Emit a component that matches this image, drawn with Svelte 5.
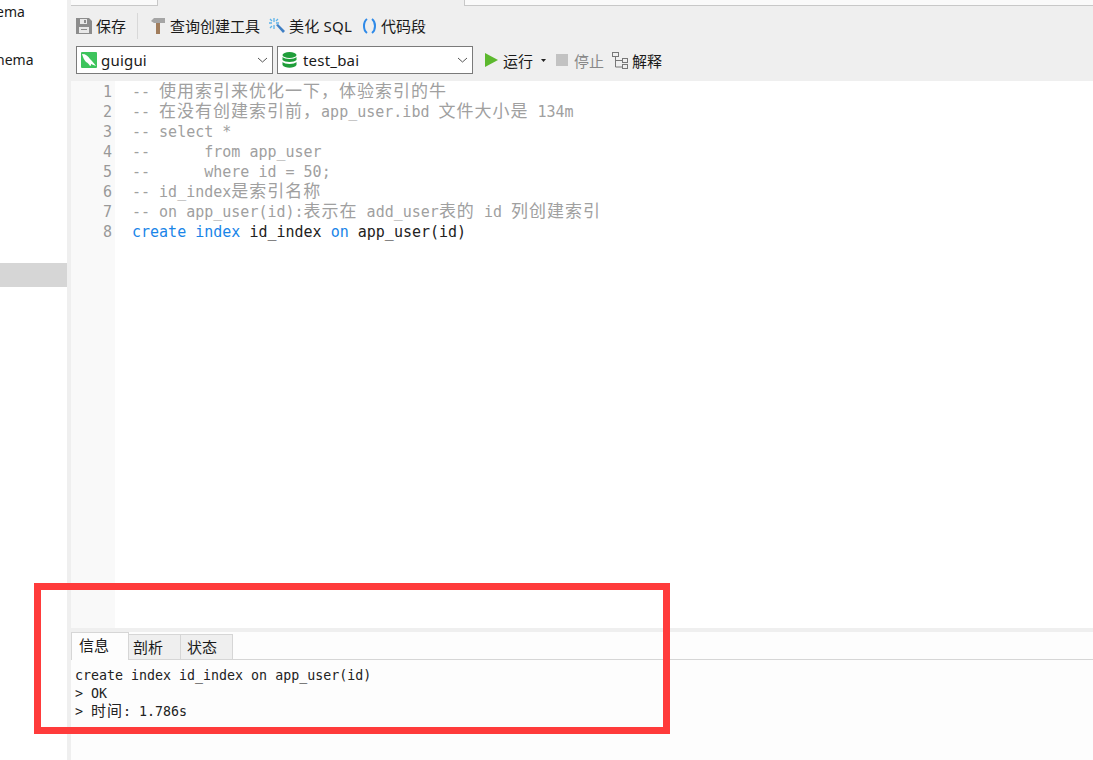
<script>
  const cjk = /([\u3000-\u9fff\uff00-\uffef]+)/
  const editorLines = [
    '-- 使用索引来优化一下，体验索引的牛',
    '-- 在没有创建索引前，app_user.ibd 文件大小是 134m',
    '-- select *',
    '--      from app_user',
    '--      where id = 50;',
    '-- id_index是索引名称',
    '-- on app_user(id):表示在 add_user表的 id 列创建索引',
  ]
  const resultLines = ['create index id_index on app_user(id)', '> OK', '> 时间: 1.786s']
  const split = (s) => s.split(cjk)
</script>

<div class="page">
  <aside class="sidebar">
    <div class="db"><span>ema</span></div>
    <div class="db"></div>
    <div class="db"><span>nema</span></div>
    <div class="selected"></div>
  </aside>

  <main class="main">
    <div class="tabs">
      <div class="tab first"></div>
      <div class="tab active"></div>
      <div class="tab rest"></div>
    </div>

    <div class="toolbar">
      <button class="tool save">
        <svg width="16" height="16" viewBox="0 0 16 16">
          <path d="M0 0h13l3 3v13H0z" fill="#8c8c8c" />
          <rect x="4" y="1" width="7" height="5" fill="#e8e8e8" />
          <rect x="8" y="2" width="2" height="3" fill="#8c8c8c" />
          <rect x="3" y="9" width="10" height="6" fill="#e8e8e8" />
          <rect x="5" y="11" width="6" height="1" fill="#8c8c8c" />
        </svg>
        保存
      </button>
      <span class="sep"></span>
      <button class="tool build">
        <svg width="14" height="16" viewBox="0 0 14 16">
          <path d="M0 3l3-3h11v5H3z" fill="#a5a5a5" />
          <rect x="5" y="5" width="4" height="11" fill="#a17d5c" />
        </svg>
        查询创建工具
      </button>
      <button class="tool beautify">
        <svg width="16" height="16" viewBox="0 0 16 16">
          <path d="M7 7l2-1 7 7-2 2z" fill="#3f7fc4" />
          <path d="M5 0v4M5 7v4M0 5h3M7 5h3M1 1l2 2M9 1L7 3M1 10l2-2" stroke="#5db4ea" stroke-width="1.3" fill="none" />
        </svg>
        美化 SQL
      </button>
      <button class="tool snippet">
        <svg width="15" height="16" viewBox="0 0 15 16">
          <path d="M5 1C1 4 1 12 5 15M10 1c4 3 4 11 0 14" stroke="#2f8ae8" stroke-width="2" fill="none" />
        </svg>
        代码段
      </button>
    </div>

    <div class="runbar">
      <div class="combo conn">
        <svg class="logo" width="16" height="16" viewBox="0 0 16 16">
          <rect width="16" height="16" rx="1" fill="#3dc45c" />
          <path d="M1 2c4 0 6 2 8 5 2 2 4 4 6 7-3-1-4-2-5-2 0 1 0 2-1 2-1-2-2-3-4-4C3 8 2 5 1 2z" fill="#fff" />
        </svg>
        <span>guigui</span>
        <svg class="chev" width="11" height="6" viewBox="0 0 11 6"><path d="M1 1l4.500 4L10 1" stroke="#555" fill="none" /></svg>
      </div>
      <div class="combo schema">
        <svg class="logo" width="15" height="16" viewBox="0 0 15 16">
          <ellipse cx="7.500" cy="3" rx="7" ry="3" fill="#1f9e3a" />
          <path d="M.5 5c2 2.500 12 2.500 14 0v3c-2 2.500-12 2.500-14 0zM.5 10c2 2.500 12 2.500 14 0v3c-2 3.500-12 3.500-14 0z" fill="#1f9e3a" />
        </svg>
        <span>test_bai</span>
        <svg class="chev" width="11" height="6" viewBox="0 0 11 6"><path d="M1 1l4.500 4L10 1" stroke="#555" fill="none" /></svg>
      </div>
      <button class="tool run">
        <svg width="13" height="14" viewBox="0 0 13 14"><path d="M0 0l13 7-13 7z" fill="#5cb82e" /></svg>
        运行
        <svg class="drop" width="5" height="3" viewBox="0 0 5 3"><path d="M0 0h5L2.500 3z" fill="#222" /></svg>
      </button>
      <button class="tool stop">
        <span class="square"></span>
        停止
      </button>
      <button class="tool explain">
        <svg width="16" height="17" viewBox="0 0 16 17" fill="none" stroke="#777">
          <rect x=".5" y=".5" width="6" height="4" />
          <rect x="10.500" y="6.500" width="5" height="4" />
          <rect x="10.500" y="12.500" width="5" height="4" />
          <path d="M3.500 5v10h7M3.500 8.500h7" />
        </svg>
        解释
      </button>
    </div>

    <div class="editor">
      <div class="gutter">
        {#each [1, 2, 3, 4, 5, 6, 7, 8] as n}
          <div>{n}</div>
        {/each}
      </div>
      <div class="code">
        {#each editorLines as line}
          <div class="line comment">
            {#each split(line) as part, i}
              {#if i % 2}<span class="wide">{part}</span>{:else}{part}{/if}
            {/each}
          </div>
        {/each}
        <div class="line"><span class="kw">create index</span> id_index <span class="kw">on</span> app_user(id)</div>
      </div>
    </div>

    <div class="result">
      <div class="result-tabs">
        <div class="rtab on">信息</div>
        <div class="rtab second">剖析</div>
        <div class="rtab third">状态</div>
      </div>
      <div class="output">
        {#each resultLines as line}
          <div class="oline">
            {#each split(line) as part, i}
              {#if i % 2}<span class="wide">{part}</span>{:else}{part}{/if}
            {/each}
          </div>
        {/each}
      </div>
    </div>
  </main>

  <div class="highlight"></div>
</div>

<style>
  :global(body) {
    margin: 0;
    background: #fdfdfd;
  }
  .page {
    position: relative;
    display: flex;
    width: 1093px;
    height: 760px;
    overflow: hidden;
    font-family: "Noto Sans", "Noto Sans CJK SC", sans-serif;
    font-size: 15px;
    color: #1a1a1a;
  }
  .sidebar {
    width: 67px;
    flex: none;
    background: #fff;
    font-size: 14px;
  }
  .db {
    height: 24px;
    line-height: 24px;
    white-space: nowrap;
  }
  .db span {
    margin-left: -4px;
  }
  .selected {
    height: 24px;
    margin-top: 191px;
    background: #d6d6d6;
  }
  .main {
    flex: 1;
    min-width: 0;
    display: flex;
    flex-direction: column;
    background: #efefef;
    padding-left: 4px;
  }
  .tabs {
    height: 6px;
    display: flex;
  }
  .tab {
    box-sizing: border-box;
    height: 6px;
    border-bottom: 1px solid #c8c8c8;
    background: #fafafa;
  }
  .tab.first { width: 87px; border-right: 1px solid #c8c8c8; }
  .tab.active { width: 306px; background: #efefef; border-bottom: 0; }
  .tab.rest { flex: 1; border-left: 1px solid #c8c8c8; }
  .toolbar {
    height: 40px;
    box-sizing: border-box;
    display: flex;
    align-items: center;
    padding-left: 5px;
    padding-bottom: 1px;
  }
  .tool {
    display: flex;
    align-items: center;
    gap: 4px;
    padding: 0;
    border: 0;
    background: none;
    font: inherit;
    color: inherit;
    white-space: nowrap;
  }
  .sep {
    width: 1px;
    height: 26px;
    margin: 0 12px 0 11px;
    background: #d8d8d8;
  }
  .build { gap: 5px; margin-left: 1px; }
  .beautify { margin-left: 9px; letter-spacing: .2px; }
  .snippet { margin-left: 10px; }
  .runbar {
    height: 35px;
    display: flex;
    align-items: flex-start;
    padding-left: 5px;
    box-sizing: border-box;
  }
  .runbar .tool { height: 28px; }
  .combo {
    box-sizing: border-box;
    height: 28px;
    display: flex;
    align-items: center;
    gap: 4px;
    background: #fff;
    border: 1px solid #7a7a7a;
    padding: 0 4px;
    margin-right: 4px;
    letter-spacing: .2px;
  }
  .conn { width: 197px; }
  .schema { width: 196px; margin-right: 12px; gap: 6px; }
  .chev { margin-left: auto; }
  .run { gap: 5px; }
  .drop { margin-left: 3px; }
  .stop { margin-left: 10px; gap: 6px; color: #888; }
  .square {
    width: 12px;
    height: 12px;
    background: #c2c2c2;
  }
  .explain { margin-left: 8px; gap: 4px; }
  .editor {
    flex: 1;
    display: flex;
    min-height: 0;
    background: #fff;
    font-family: "DejaVu Sans Mono", "Noto Sans CJK SC", monospace;
    font-size: 15px;
    line-height: 20px;
  }
  .gutter {
    width: 44px;
    flex: none;
    background: #f9f9f9;
    box-sizing: border-box;
    padding: 1px 3px 0 0;
    text-align: right;
    color: #999;
  }
  .code {
    padding: 1px 0 0 17px;
    color: #222;
  }
  .line {
    height: 20px;
    white-space: pre;
  }
  .comment { color: #a0a0a0; }
  .wide {
    font-size: 17px;
    line-height: 1;
    letter-spacing: 1px;
  }
  .kw { color: #1a85e8; }
  .result {
    height: 128px;
    flex: none;
    margin-top: 4px;
    background: #fdfdfd;
  }
  .result-tabs {
    box-sizing: border-box;
    height: 28px;
    display: flex;
    align-items: flex-end;
    border-bottom: 1px solid #d6d6d6;
  }
  .rtab {
    box-sizing: border-box;
    height: 25px;
    line-height: 24px;
    background: #efefef;
    border: 1px solid #d6d6d6;
    border-left: 0;
    border-bottom: 0;
  }
  .rtab.on {
    height: 28px;
    width: 58px;
    line-height: 25px;
    padding-left: 7px;
    background: #fdfdfd;
    border-left: 1px solid #d6d6d6;
    margin-bottom: -1px;
  }
  .rtab.second { width: 52px; padding-left: 4px; }
  .rtab.third { width: 52px; padding-left: 6px; }
  .output {
    padding: 7px 0 0 4px;
    font-family: "DejaVu Sans Mono", "Noto Sans CJK SC", monospace;
    font-size: 13.3px;
    line-height: 18px;
    color: #222;
  }
  .oline {
    height: 18px;
    white-space: pre;
  }
  .output .wide {
    font-size: 15px;
    letter-spacing: 1px;
  }
  .highlight {
    position: absolute;
    left: 34px;
    top: 583px;
    width: 622px;
    height: 137px;
    border: 7px solid #ff3b3b;
  }
</style>
